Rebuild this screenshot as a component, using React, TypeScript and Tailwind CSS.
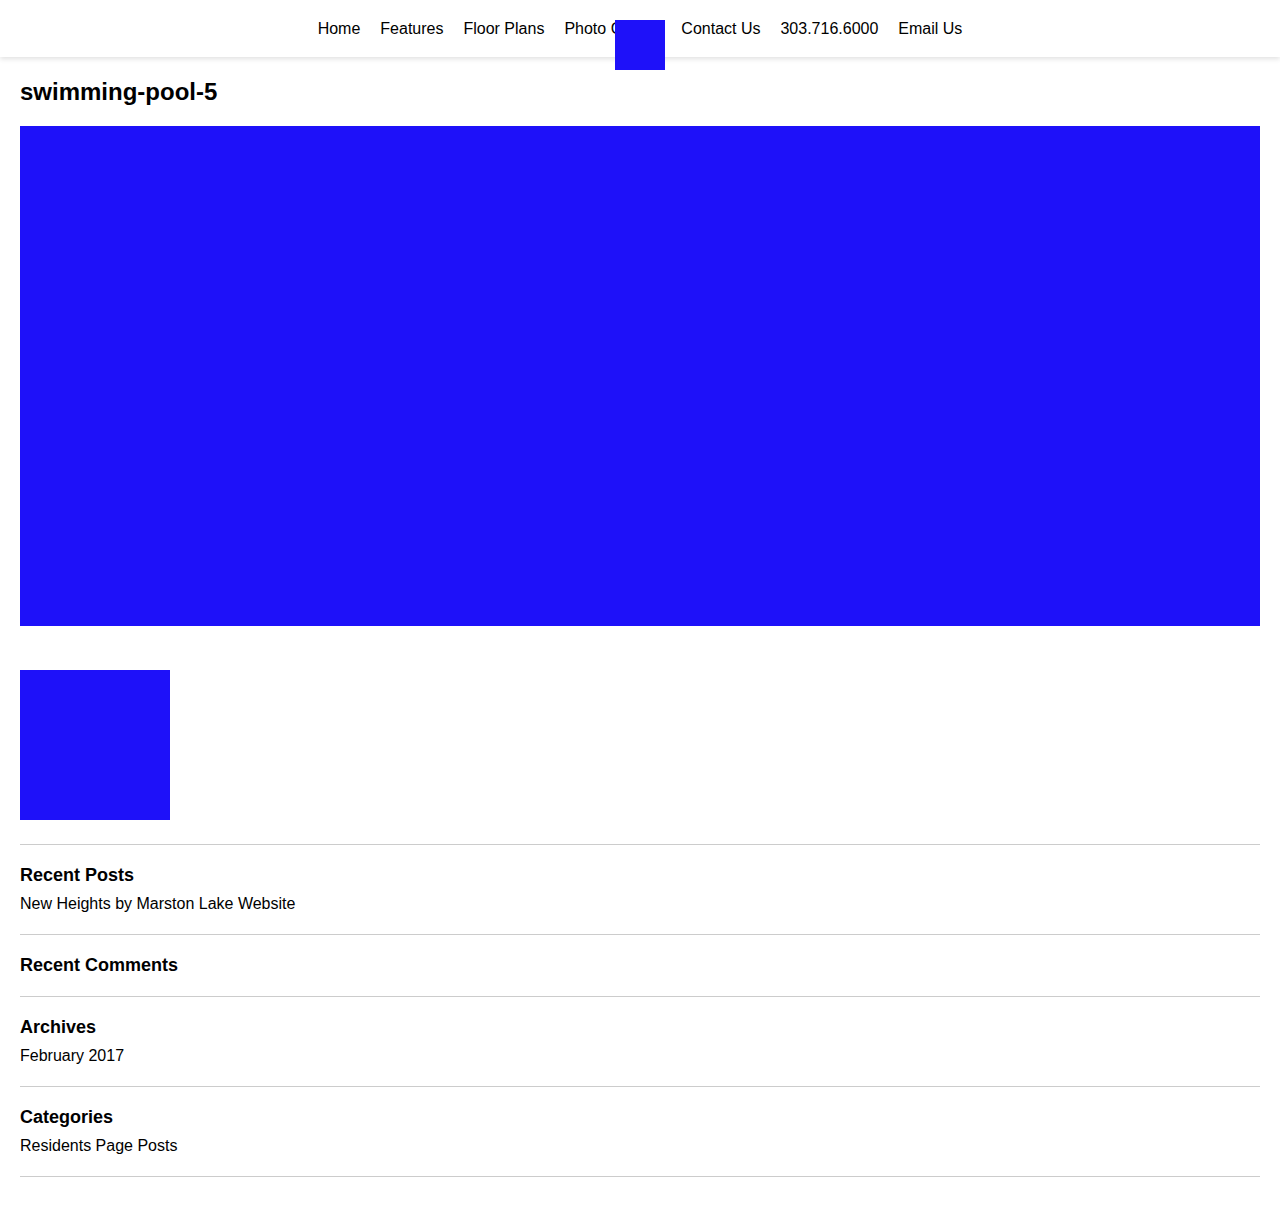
export default function App() {
  const navItems = ['Home', 'Features', 'Floor Plans', 'Photo Gallery', 'Contact Us', '303.716.6000', 'Email Us']

  const widgets = [
    { title: 'Recent Posts', items: ['New Heights by Marston Lake Website'] },
    { title: 'Recent Comments', items: [] as string[] },
    { title: 'Archives', items: ['February 2017'] },
    { title: 'Categories', items: ['Residents Page Posts'] },
  ]

  return (
    <div className="min-h-[1217px] bg-white text-black font-['Liberation_Sans',Arial,sans-serif]">
      {/* Header */}
      <header className="relative h-[57px] bg-white shadow-[0_2px_5px_rgba(0,0,0,0.12)] flex items-center justify-center">
        <nav className="flex flex-row gap-5 text-base leading-6">
          {navItems.map((item) => (
            <a key={item} href="#" className="text-black">
              {item}
            </a>
          ))}
        </nav>
        <div className="absolute left-[615px] top-[20px] w-[50px] h-[50px] bg-[#1e11f9]" />
      </header>

      {/* Content */}
      <main className="px-5 pt-5 pb-10">
        <h1 className="text-2xl leading-[29px] font-bold mb-5">swimming-pool-5</h1>
        <div className="w-full h-[500px] bg-[#1e11f9]" />
        <div className="mt-[44px] w-[150px] h-[150px] bg-[#1e11f9]" />

        {/* Sidebar widgets */}
        <div className="mt-6">
          {widgets.map((w) => (
            <section key={w.title} className="border-t border-[#cccccc] pt-[17px] pb-[18px] last:border-b">
              <h3 className="text-lg leading-[26px] font-bold">{w.title}</h3>
              {w.items.length > 0 && (
                <ul className="mt-[4px]">
                  {w.items.map((it) => (
                    <li key={it} className="text-base leading-6">
                      {it}
                    </li>
                  ))}
                </ul>
              )}
            </section>
          ))}
        </div>
      </main>
    </div>
  )
}
